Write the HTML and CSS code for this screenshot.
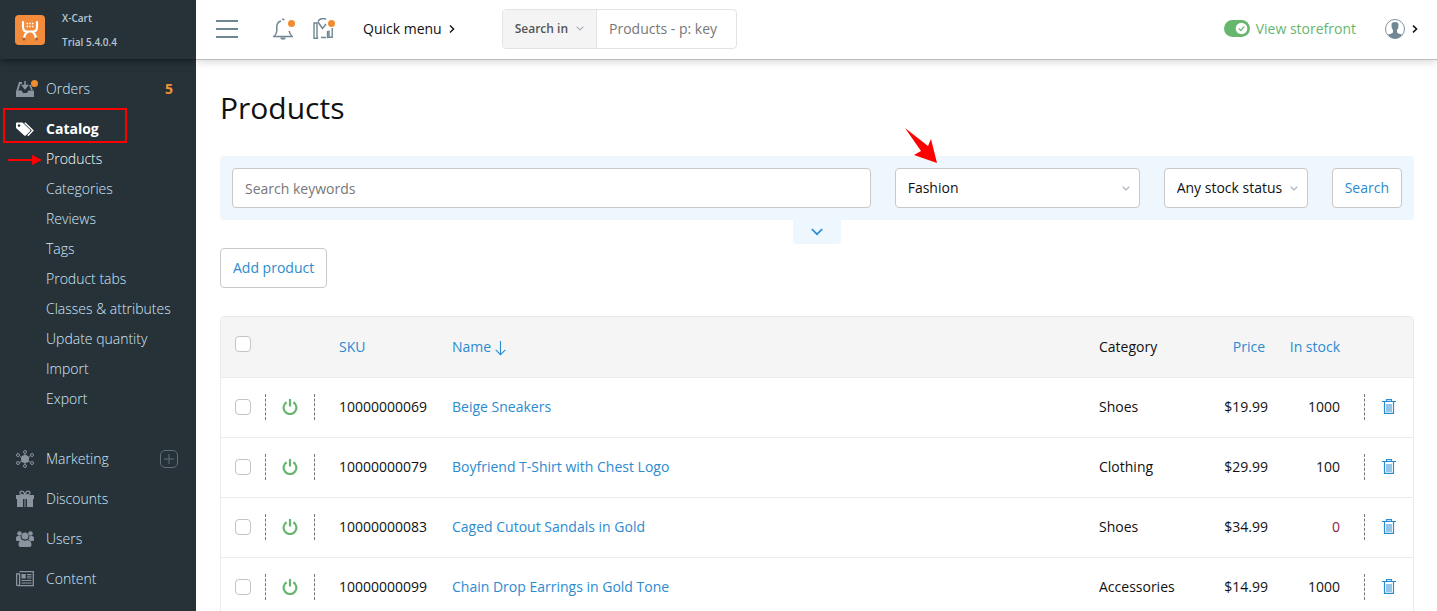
FILE: index.html
```html
<!DOCTYPE html>
<html lang="en">
<head>
<meta charset="utf-8">
<title>Products</title>
<link rel="stylesheet" href="styles.css">
</head>
<body>
<svg class="defs" aria-hidden="true">
  <symbol id="power" viewBox="0 0 16 16"><path d="M4.600 3.200a6.400 6.400 0 1 0 6.800 0" fill="none" stroke="currentColor" stroke-width="2.200"/><path d="M8 0v7.500" stroke="currentColor" stroke-width="2.200"/></symbol>
  <symbol id="trash" viewBox="0 0 14 15"><path d="M0 2.500h14M4.500 2V.7h5V2M2.500 3v11.300h9V3" fill="none" stroke="currentColor" stroke-width="1.200"/><path d="M5 5v8M7 5v8M9 5v8" stroke="currentColor"/></symbol>
</svg>
<div class="app">
  <aside class="sidebar">
    <div class="brand">
      <svg class="logo" viewBox="0 0 30 30"><rect width="30" height="30" rx="4" fill="#f28c3c"/><path d="M8 7v5q0 4.500 4 4.500h6q4 0 4-4.500V7M9 24q.5-6.500 5-7.500h2q4.500 1 5 7.500" fill="none" stroke="#fff" stroke-width="2.200" stroke-linecap="round"/><path d="M11.500 8.500h7M11.500 11.500h7" stroke="#fff" stroke-width="1.600" stroke-dasharray="1.600 1.100"/><circle cx="9" cy="24" r="1.500" fill="#a55f3c"/><circle cx="21.500" cy="24" r="1.500" fill="#a55f3c"/></svg>
      <div class="brand-text"><span>X-Cart</span><span>Trial 5.4.0.4</span></div>
    </div>
    <nav>
      <ul class="menu">
        <li><a class="item" href="#"><svg class="icon" viewBox="0 0 18 18"><path d="M0 17v-5.500L3 2h3v2H4.400L2.200 10.500H5.500L7 13h4l1.500-2.500H18V17z" fill="currentColor"/><path d="M9 1v5M6.500 5.500h5L9 8.500z" fill="currentColor" stroke="currentColor" stroke-width="1.500"/><path d="M14 5l2 5" stroke="currentColor" stroke-width="1.800"/></svg><span class="dot"></span>Orders<b class="count">5</b></a></li>
        <li class="open"><a class="item active" href="#"><svg class="icon" viewBox="0 0 18 18"><path d="M0 3.500Q0 2.500 1 2.500h5.500L14 9.800q.8.700 0 1.500l-4.200 4.200q-.8.700-1.500 0L0 8zM3 4.200a1.300 1.300 0 1 0 .1 0z" fill="currentColor" fill-rule="evenodd"/><path d="M8.800 2.800l8 7.700-5 5.300" fill="none" stroke="currentColor" stroke-width="1.500"/></svg>Catalog</a>
          <ul class="submenu">
            <li><a class="current" href="#">Products</a></li>
            <li><a href="#">Categories</a></li>
            <li><a href="#">Reviews</a></li>
            <li><a href="#">Tags</a></li>
            <li><a href="#">Product tabs</a></li>
            <li><a href="#">Classes &amp; attributes</a></li>
            <li><a href="#">Update quantity</a></li>
            <li><a href="#">Import</a></li>
            <li><a href="#">Export</a></li>
          </ul>
          <span class="outline"></span>
          <svg class="pointer" viewBox="0 0 34 10"><path d="M0 5h26" stroke="red" stroke-width="2"/><path d="M24 0l10 5-10 5z" fill="red"/></svg>
        </li>
        <li><a class="item" href="#"><svg class="icon" viewBox="0 0 18 18"><g fill="none" stroke="currentColor" stroke-width="1"><path d="M9 4v10M4 6.500l10 5.500M14 6.500L4 12"/><circle cx="9" cy="2" r="1.500"/><circle cx="9" cy="16" r="1.500"/><circle cx="2" cy="5" r="1.500"/><circle cx="16" cy="5" r="1.500"/><circle cx="2" cy="13" r="1.500"/><circle cx="16" cy="13" r="1.500"/></g><circle cx="9" cy="9" r="4" fill="currentColor"/></svg>Marketing<svg class="plus" viewBox="0 0 18 18"><rect x=".5" y=".5" width="17" height="17" rx="4.500" fill="none" stroke="currentColor"/><path d="M9 4v10M4 9h10" stroke="currentColor"/></svg></a></li>
        <li><a class="item" href="#"><svg class="icon" viewBox="0 0 18 18"><path d="M0 5h18v4H0zM1 9h6v8H1zM11 9h6v8h-6zM8.500 5h1v12h-1z" fill="currentColor"/><path d="M9 5Q4 5 4 3t2-1.800Q8 1.200 9 5q1-3.800 3-3.800T14 3t-5 2" fill="none" stroke="currentColor" stroke-width="1.300"/></svg>Discounts</a></li>
        <li><a class="item" href="#"><svg class="icon" viewBox="0 0 18 18"><g fill="currentColor"><circle cx="3.500" cy="3.500" r="2.300"/><circle cx="14.500" cy="3.500" r="2.300"/><circle cx="9" cy="6" r="3.500"/><path d="M0 10V8q0-2 2-2h2.500q0 3 2 4.200L5 11H1q-1 0-1-1zM18 10V8q0-2-2-2h-2.500q0 3-2 4.200L13 11h4q1 0 1-1zM2.500 15q0-5 4-5 2.500 1.300 5 0 4 0 4 5 0 2-2 2h-9q-2 0-2-2z"/></g></svg>Users</a></li>
        <li><a class="item" href="#"><svg class="icon" viewBox="0 0 18 18"><path d="M3.500 1.700h13.800v14H2q-1.400 0-1.400-1.400V4h3v10q0 1.700-1.500 1.700" fill="none" stroke="currentColor" stroke-width="1.300"/><path d="M5.500 4h4.200v4.500H5.500z" fill="currentColor"/><path d="M11 4.500h4.500M11 8h4.500M5.500 10.500h10M5.500 13h10M11 6.200h4.500" stroke="currentColor"/></svg>Content</a></li>
      </ul>
    </nav>
  </aside>
  <div class="page">
    <header class="topbar">
      <button class="plain burger" aria-label="Menu"><span></span><span></span><span></span></button>
      <button class="plain bell" aria-label="Notifications"><svg viewBox="0 0 20 22"><path d="M9 1.500q1.500-1 2 .8M8 3Q3.800 4 3.800 9v4Q3.500 16.500.8 18.500h18.400Q16.600 16.500 16.200 13" fill="none" stroke="currentColor" stroke-width="1.500"/><path d="M7 19.500h6q-.5 2.200-3 2.200t-3-2.200z" fill="currentColor"/></svg><span class="dot"></span></button>
      <button class="plain news" aria-label="Marketplace"><svg viewBox="0 0 20 21"><path d="M4 18.500V5H1v15.200h4q-1.200-.5-1-2M5 3.500q1.500-3 5-3 1.800 0 3 .8M5 4l4.500 6.500L13 6M8 19.500h5M16 12.500v6.700h3.200V10M16 18.500q-.2 1.200-1.500 1V13" fill="none" stroke="currentColor" stroke-width="1.400"/></svg><span class="dot"></span></button>
      <button class="plain quick">Quick menu <svg class="chev" viewBox="0 0 6 8"><path d="M1 .6L4.600 4 1 7.400" fill="none" stroke="currentColor" stroke-width="1.400"/></svg></button>
      <form class="finder">
        <button type="button" class="scope">Search in <svg class="caret" viewBox="0 0 8 5"><path d="M.6.700L4 4 7.400.700" fill="none" stroke="#a9aebb" stroke-width="1.100"/></svg></button>
        <input type="text" aria-label="Search products" placeholder="Products - p: key">
      </form>
      <a class="storefront" href="#"><svg viewBox="0 0 26 17"><rect width="26" height="17" rx="8.500" fill="#66b66e"/><circle cx="17.500" cy="8.500" r="5.800" fill="#fff"/><path d="M14.800 8.500l2 2 3.600-4" fill="none" stroke="#66b66e" stroke-width="1.200"/></svg>View storefront</a>
      <button class="plain account" aria-label="Account"><svg class="avatar" viewBox="0 0 20 20"><circle cx="10" cy="10" r="9.500" fill="#fff" stroke="currentColor" stroke-width=".9"/><path d="M6.500 5.500Q6.500 3 10 3t3.500 2.500q.3 4-1.500 5.500v2.200q.5 1.300 5 2.300-2.700 4-7 4t-7-4q4.500-1 5-2.300V11Q6.200 9.500 6.500 5.500z" fill="currentColor"/></svg><svg class="chev" viewBox="0 0 6 8"><path d="M1 .6L4.600 4 1 7.400" fill="none" stroke="#111" stroke-width="1.500"/></svg></button>
    </header>
    <main>
      <h1>Products</h1>
      <form class="filters">
        <input class="field keywords" type="text" aria-label="Search keywords" placeholder="Search keywords">
        <select class="field category" aria-label="Category"><option>Fashion</option></select>
        <select class="field stock" aria-label="Stock status"><option>Any stock status</option></select>
        <button type="button" class="btn">Search</button>
        <button type="button" class="more" aria-label="More filters"><svg viewBox="0 0 12 8"><path d="M.8 1L6 6.200 11.200 1" fill="none" stroke="#2b8bd0" stroke-width="1.700"/></svg></button>
        <svg class="arrow" viewBox="0 0 34 37"><path d="M1 1L24 19 27 12 33 36 10 28 17 24z" fill="red"/></svg>
      </form>
      <button class="btn">Add product</button>
      <table>
        <colgroup><col class="c-check"><col class="c-power"><col class="c-sku"><col><col class="c-cat"><col class="c-price"><col class="c-qty"><col class="c-del"></colgroup>
        <thead><tr>
          <th class="check"><input type="checkbox" aria-label="Select all"></th><th></th>
          <th class="text"><a href="#">SKU</a></th>
          <th class="text"><a href="#">Name <svg class="sort" viewBox="0 0 11 15"><path d="M5.500 0v13.500M.7 8.800l4.800 4.900 4.800-4.900" fill="none" stroke="currentColor" stroke-width="1.100"/></svg></a></th>
          <th class="text">Category</th><th class="price"><a href="#">Price</a></th><th class="qty"><a href="#">In stock</a></th><th></th>
        </tr></thead>
        <tbody>
          <tr><td class="check"><input type="checkbox" aria-label="Select Beige Sneakers"></td><td><div class="power"><button class="plain" aria-label="Disable"><svg><use href="#power"/></svg></button></div></td><td class="text">10000000069</td><td class="text"><a href="#">Beige Sneakers</a></td><td class="text">Shoes</td><td class="price">$19.99</td><td class="qty">1000</td><td><div class="del"><button class="plain" aria-label="Delete"><svg><use href="#trash"/></svg></button></div></td></tr>
          <tr><td class="check"><input type="checkbox" aria-label="Select Boyfriend T-Shirt"></td><td><div class="power"><button class="plain" aria-label="Disable"><svg><use href="#power"/></svg></button></div></td><td class="text">10000000079</td><td class="text"><a href="#">Boyfriend T-Shirt with Chest Logo</a></td><td class="text">Clothing</td><td class="price">$29.99</td><td class="qty">100</td><td><div class="del"><button class="plain" aria-label="Delete"><svg><use href="#trash"/></svg></button></div></td></tr>
          <tr><td class="check"><input type="checkbox" aria-label="Select Caged Cutout Sandals"></td><td><div class="power"><button class="plain" aria-label="Disable"><svg><use href="#power"/></svg></button></div></td><td class="text">10000000083</td><td class="text"><a href="#">Caged Cutout Sandals in Gold</a></td><td class="text">Shoes</td><td class="price">$34.99</td><td class="qty none">0</td><td><div class="del"><button class="plain" aria-label="Delete"><svg><use href="#trash"/></svg></button></div></td></tr>
          <tr><td class="check"><input type="checkbox" aria-label="Select Chain Drop Earrings"></td><td><div class="power"><button class="plain" aria-label="Disable"><svg><use href="#power"/></svg></button></div></td><td class="text">10000000099</td><td class="text"><a href="#">Chain Drop Earrings in Gold Tone</a></td><td class="text">Accessories</td><td class="price">$14.99</td><td class="qty">1000</td><td><div class="del"><button class="plain" aria-label="Delete"><svg><use href="#trash"/></svg></button></div></td></tr>
        </tbody>
      </table>
    </main>
  </div>
</div>
</body>
</html>
```

FILE: styles.css
```css
* { box-sizing: border-box; }
body { margin: 0; font: 14px/20px "Open Sans", "Noto Sans", sans-serif; color: #111; background: #fff; }
a { color: #2b8bd0; text-decoration: none; }
ul { list-style: none; margin: 0; padding: 0; }
svg { display: block; flex: none; }
button, input, select { font: inherit; color: inherit; }
.defs { display: none; }
.plain { border: 0; padding: 0; background: none; display: flex; align-items: center; }

.app { display: flex; height: 100vh; overflow: hidden; }
.sidebar { width: 196px; flex: none; overflow: hidden; background: #263238; }
.brand { display: flex; gap: 17px; height: 59px; padding: 0 15px; align-items: center; box-shadow: 0 1px 8px rgba(0, 0, 0, .6); }
.logo { width: 30px; height: 30px; }
.brand-text { display: flex; flex-direction: column; font-size: 10px; line-height: 24px; font-weight: 600; color: #b9c6d2; }
.menu { padding-top: 10px; }
.menu > li { position: relative; }
.item { position: relative; display: flex; align-items: center; height: 40px; padding: 0 16px; gap: 12px; color: #d2e8fb; font-weight: 300; }
.item.active { color: #fff; font-weight: 700; }
.icon { width: 18px; height: 18px; color: #8a939e; }
.active .icon { color: #fff; }
.dot { position: absolute; width: 7px; height: 7px; border-radius: 50%; background: #f28c30; }
.item .dot { left: 31px; top: 11px; }
.count { margin-left: auto; padding-right: 7px; color: #f29434; font-weight: 700; }
.plus { width: 18px; height: 18px; margin-left: auto; margin-right: 2px; color: #626e77; }
.submenu { margin: -5px 0 25px; font-weight: 300; line-height: 30px; }
.submenu a { display: block; padding-left: 46px; color: #d2e8fb; }
.submenu .current { color: #fff; }
.outline { position: absolute; left: 3px; top: -1px; width: 124px; height: 35px; border: 2px solid red; }
.pointer { position: absolute; left: 8px; top: 46px; width: 34px; height: 10px; }

.page { flex: 1; min-width: 0; overflow: hidden; }
.topbar { display: flex; align-items: center; height: 60px; padding: 0 19px 2px 20px; border-bottom: 1px solid #bbb; box-shadow: 0 2px 8px rgba(0, 0, 0, .16); color: #6f8793; }
.burger { flex-direction: column; gap: 6px; width: 22px; }
.burger span { width: 100%; height: 2px; background: #6f8793; }
.bell, .news { position: relative; }
.bell { margin-left: 35px; }
.bell svg { width: 20px; height: 22px; }
.news { margin-left: 20px; }
.news svg { width: 20px; height: 21px; }
.topbar .dot { right: -2px; top: 2px; }
.quick { gap: 7px; margin-left: 30px; color: #111; }
.chev { width: 6px; height: 8px; }
.finder { display: flex; width: 235px; height: 40px; margin-left: 47px; border: 1px solid #e3e3e3; border-radius: 4px; }
.scope { display: flex; align-items: center; gap: 8px; padding: 0 12px; border: 0; border-right: 1px solid #e3e3e3; border-radius: 3px 0 0 3px; background: #f4f4f4; color: #555; font-size: 12px; font-weight: 600; white-space: nowrap; }
.caret { width: 8px; height: 5px; }
.finder input { flex: 1; min-width: 0; border: 0; padding: 0 12px; background: none; }
::placeholder { color: #777; opacity: 1; }
.storefront { display: flex; align-items: center; gap: 6px; margin-left: auto; color: #66b66e; }
.storefront svg { width: 26px; height: 17px; }
.account { gap: 7px; margin-left: 29px; color: #6f8793; }
.avatar { width: 20px; height: 20px; }

main { padding: 28px 23px 0 24px; }
h1 { margin: 0 0 28px; font-size: 30px; line-height: 40px; font-weight: 400; }
.filters { position: relative; display: flex; gap: 24px; margin-bottom: 28px; padding: 12px; background: #eef6fe; border-radius: 4px; }
.field, .btn { height: 40px; padding: 0 12px; border: 1px solid #c8c8c8; border-radius: 4px; background: #fff; }
.btn { color: #2b8bd0; }
.keywords { flex: 1; min-width: 0; }
select.field { appearance: none; background: #fff url("data:image/svg+xml,%3Csvg xmlns='http://www.w3.org/2000/svg' width='8' height='5'%3E%3Cpath d='M.6.7L4 4 7.400.7' fill='none' stroke='%23a9aebb' stroke-width='1.100'/%3E%3C/svg%3E") no-repeat right 9px center; }
.category { width: 245px; }
.stock { width: 144px; }
.more { position: absolute; left: 50%; top: 100%; display: flex; align-items: center; justify-content: center; width: 48px; height: 24px; margin-left: -24px; border: 0; padding: 0; background: #eef6fe; border-radius: 0 0 4px 4px; }
.more svg { width: 12px; height: 8px; }
.arrow { position: absolute; right: 476px; top: -29px; width: 34px; height: 37px; }

table { width: 100%; margin-top: 28px; table-layout: fixed; border-collapse: separate; border-spacing: 0; border: 1px solid #ebebeb; border-radius: 4px; }
.c-check { width: 44px; }
.c-power { width: 50px; }
.c-sku { width: 113px; }
.c-cat { width: 126px; }
.c-price { width: 79px; }
.c-qty { width: 84px; }
.c-del { width: 49px; }
th, td { height: 60px; padding: 0; border-bottom: 1px solid #ebebeb; font-weight: 400; text-align: left; white-space: nowrap; }
td { padding-bottom: 2px; }
th { height: 61px; background: #f5f5f5; }
th:first-child { border-radius: 3px 0 0; }
th:last-child { border-radius: 0 3px 0 0; }
.text { padding-left: 24px; }
.price { text-align: right; padding-right: 12px; }
th.price { padding-right: 15px; }
.qty { text-align: right; padding-right: 24px; }
.none { color: #8c1d48; }
.check { padding-left: 14px; }
.check input { appearance: none; display: block; width: 16px; height: 16px; margin: 0; border: 1px solid #c4c4c4; border-radius: 4px; background: #fff; }
th.check { padding-bottom: 6px; }
.sort { display: inline-block; width: 11px; height: 15px; vertical-align: -4px; }
.power, .del { display: flex; align-items: center; justify-content: center; height: 26px; border-left: 1px dashed #777; }
.power { border-right: 1px dashed #777; color: #66b66e; }
.power svg { width: 16px; height: 16px; }
.del { color: #2b8bd0; }
.del svg { width: 14px; height: 15px; }
```
